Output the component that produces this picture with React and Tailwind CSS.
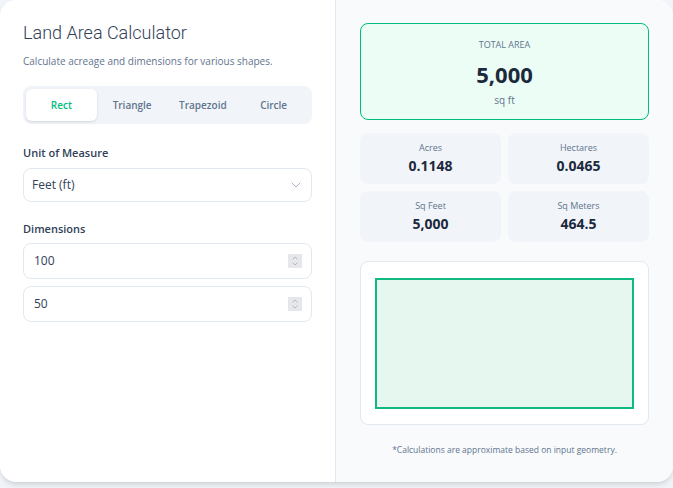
import React, { useState } from 'react';
import { ChevronDown, ChevronUp } from 'lucide-react';

const tabs = ['Rect', 'Triangle', 'Trapezoid', 'Circle'];

const stats = [
  { label: 'Acres', value: '0.1148' },
  { label: 'Hectares', value: '0.0465' },
  { label: 'Sq Feet', value: '5,000' },
  { label: 'Sq Meters', value: '464.5' },
];

// number field with a small always-visible stepper
const NumberField = ({ value, onChange }) => (
  <div className="flex h-[36px] w-full items-center rounded-lg border border-slate-200 bg-white pl-[10px] pr-[9px]">
    <input
      type="number"
      value={value}
      onChange={onChange}
      className="min-w-0 flex-1 bg-transparent text-[12px] text-slate-700 outline-none [appearance:textfield] [&::-webkit-inner-spin-button]:appearance-none [&::-webkit-outer-spin-button]:appearance-none"
    />
    <span className="flex h-[14px] w-[14px] flex-col items-center justify-center bg-gray-200 text-gray-400">
      <ChevronUp className="-mb-[2px] h-[8px] w-[8px]" strokeWidth={2} />
      <ChevronDown className="h-[8px] w-[8px]" strokeWidth={2} />
    </span>
  </div>
);

export default function App() {
  const [shape, setShape] = useState('Rect');
  const [length, setLength] = useState('100');
  const [width, setWidth] = useState('50');

  return (
    <div className="min-h-screen bg-slate-100 font-['Open_Sans',sans-serif]">
      <div className="flex h-[482px] overflow-hidden rounded-2xl bg-white shadow-md">
        {/* Inputs */}
        <div className="w-[336px] shrink-0 border-r border-slate-200 px-[23px] pt-[21px]">
          <h1 className="font-['Roboto',sans-serif] text-[18px] font-light leading-6 text-slate-700">
            Land Area Calculator
          </h1>
          <p className="mt-[9px] text-[10px] text-slate-500">
            Calculate acreage and dimensions for various shapes.
          </p>

          <div className="mt-[17px] grid grid-cols-4 gap-0 rounded-lg bg-slate-100 p-[3px]">
            {tabs.map((t) => (
              <button
                key={t}
                onClick={() => setShape(t)}
                className={
                  t === shape
                    ? 'h-[32px] rounded-md bg-white text-[10px] font-semibold text-emerald-500 shadow-sm'
                    : 'h-[32px] rounded-md text-[10px] font-semibold text-slate-500'
                }
              >
                {t}
              </button>
            ))}
          </div>

          <label className="mt-[21px] block text-[11px] font-semibold text-slate-700">Unit of Measure</label>
          <div className="relative mt-[6px]">
            <select className="h-[34px] w-full appearance-none rounded-lg border border-slate-200 bg-white px-[8px] text-[12px] text-slate-700 outline-none">
              <option>Feet (ft)</option>
              <option>Meters (m)</option>
            </select>
            <ChevronDown className="pointer-events-none absolute right-[8px] top-[9px] h-[16px] w-[16px] text-slate-400" strokeWidth={1.25} />
          </div>

          <label className="mt-[19px] block text-[11px] font-semibold text-slate-700">Dimensions</label>
          <div className="mt-[6px] flex flex-col gap-[7px]">
            <NumberField value={length} onChange={(e) => setLength(e.target.value)} />
            <NumberField value={width} onChange={(e) => setWidth(e.target.value)} />
          </div>
        </div>

        {/* Results */}
        <div className="flex flex-1 flex-col bg-slate-50 px-[24px] pt-[23px]">
          <div className="flex h-[97px] flex-col items-center rounded-lg border border-emerald-500 bg-emerald-50 pt-[14px]">
            <div className="text-[9px] uppercase text-slate-500">Total Area</div>
            <div className="mt-[8px] text-[22px] font-bold leading-7 text-slate-800">5,000</div>
            <div className="mt-[5px] text-[10px] text-slate-500">sq ft</div>
          </div>

          <div className="mt-[13px] grid grid-cols-2 gap-[7px]">
            {stats.map((s) => (
              <div key={s.label} className="flex h-[51px] flex-col items-center justify-center rounded-lg bg-slate-100">
                <div className="text-[9px] text-slate-500">{s.label}</div>
                <div className="mt-[1px] text-[14px] font-bold text-slate-800">{s.value}</div>
              </div>
            ))}
          </div>

          <div className="mt-[19px] flex h-[164px] items-center justify-center rounded-lg border border-slate-200 bg-white">
            <svg width="259" height="131" viewBox="0 0 259 131">
              <rect x="1" y="1" width="257" height="129" fill="#e6f7f0" stroke="#10b981" strokeWidth="2" />
            </svg>
          </div>

          <p className="mt-[19px] text-center text-[8.5px] text-slate-500">
            *Calculations are approximate based on input geometry.
          </p>
        </div>
      </div>
    </div>
  );
}
